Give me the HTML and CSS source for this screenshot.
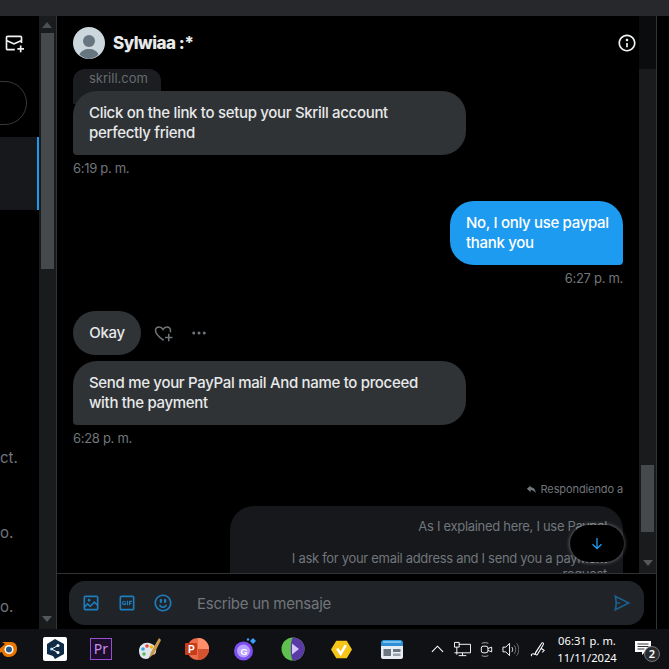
FILE: index.html
```html
<!DOCTYPE html>
<html lang="es">
<head>
<meta charset="utf-8">
<title>Sylwiaa :*</title>
<link rel="stylesheet" href="styles.css">
</head>
<body>
<div class="topbar"></div>
<main class="app">
  <aside class="sidebar">
    <div class="side-head">
      <svg class="i-mail" viewBox="0 0 24 24"><path d="M1.998 5.5c0-1.381 1.119-2.5 2.5-2.5h15c1.381 0 2.5 1.119 2.5 2.5V12h-2v-1.537l-8 3.635-8-3.635V18.5c0 .276.224.5.5.5H13v2H4.498c-1.381 0-2.5-1.119-2.5-2.5v-13zm2 2.766l8 3.635 8-3.635V5.5c0-.276-.224-.5-.5-.5h-15c-.276 0-.5.224-.5.5v2.766zM19 18v-3h2v3h3v2h-3v3h-2v-3h-3v-2h3z"/></svg>
    </div>
    <div class="side-search"></div>
    <div class="side-selected"></div>
    <p class="side-text t1">ct.</p>
    <p class="side-text t2">o.</p>
    <p class="side-text t3">o.</p>
  </aside>
  <div class="scrollbar left-bar">
    <span class="arrow up"></span>
    <span class="thumb"></span>
    <span class="arrow down"></span>
  </div>
  <section class="chat">
    <header class="chat-head">
      <svg class="avatar" viewBox="0 0 32 32"><circle cx="16" cy="16" r="16" fill="#ccd6dd"/><circle cx="16" cy="14" r="6" fill="#66757f"/><path d="M6.5 27.5c1.5-3.6 5-5.500 9.500-5.500s8 1.900 9.500 5.500A16 16 0 0 1 16 32a16 16 0 0 1-9.500-4.500z" fill="#66757f"/></svg>
      <h1 class="name">Sylwiaa :*</h1>
      <svg class="i-info" viewBox="0 0 24 24"><path d="M13.500 8.500c0 .83-.67 1.500-1.500 1.500s-1.500-.67-1.500-1.500S11.170 7 12 7s1.500.67 1.500 1.500zM13 17v-5h-2v5h2zm-1 5.250c5.660 0 10.250-4.590 10.250-10.250S17.660 1.750 12 1.750 1.750 6.340 1.750 12 6.340 22.250 12 22.250zM20.250 12c0 4.560-3.690 8.250-8.250 8.250S3.750 16.560 3.750 12 7.440 3.750 12 3.750s8.250 3.690 8.250 8.250z"/></svg>
      <span class="head-track"></span>
    </header>
    <div class="thread">
      <div class="messages">
        <div class="link-card">skrill.com</div>
        <div class="bubble them">Click on the link to setup your Skrill account perfectly friend</div>
        <div class="time">6:19 p. m.</div>
        <div class="bubble me">No, I only use paypal thank you</div>
        <div class="time right">6:27 p. m.</div>
        <div class="okay-row">
          <div class="bubble okay">Okay</div>
          <svg class="i-heart" viewBox="0 0 24 24"><path d="M13 19.500l-1 .8C7 16.500 3 13.500 3 9.300 3 6.600 5 4.800 7.300 4.800c1.900 0 3.600 1 4.700 2.900 1.100-1.900 2.800-2.900 4.700-2.900 2.300 0 4.300 1.800 4.300 4.500 0 .6-.1 1.200-.3 1.700" fill="none" stroke="#71767b" stroke-width="1.800"/><path d="M18 13v3.500h-3.500v1.800H18v3.500h1.800v-3.500h3.500v-1.800h-3.500V13z" fill="#71767b"/></svg>
          <svg class="i-dots" viewBox="0 0 24 24"><circle cx="5" cy="12" r="2"/><circle cx="12" cy="12" r="2"/><circle cx="19" cy="12" r="2"/></svg>
        </div>
        <div class="bubble them second">Send me your PayPal mail And name to proceed with the payment</div>
        <div class="time">6:28 p. m.</div>
        <div class="reply-label">
          <svg class="i-reply" viewBox="0 0 24 24"><path d="M10 3L2 10.500 10 18v-5c5 0 8 1.500 11 7 0-8-4-13-11-13V3z"/></svg>
          <span>Respondiendo a</span>
        </div>
        <div class="quote">
          <p>As I explained here, I use Paypal</p>
          <p>I ask for your email address and I send you a payment request</p>
        </div>
      </div>
      <div class="scrollbar right-bar">
        <span class="thumb"></span>
        <span class="arrow down"></span>
      </div>
      <button class="to-bottom" type="button" aria-label="Bajar">
        <svg viewBox="0 0 24 24"><path d="M13 3v13.586l5.043-5.043 1.414 1.414L12 20.414l-7.457-7.457 1.414-1.414L11 16.586V3h2z"/></svg>
      </button>
    </div>
    <div class="composer-wrap">
      <div class="composer">
        <svg class="c-icon" viewBox="0 0 24 24"><path d="M3 5.500C3 4.119 4.119 3 5.500 3h13C19.881 3 21 4.119 21 5.500v13c0 1.381-1.119 2.500-2.500 2.500h-13C4.119 21 3 19.881 3 18.500v-13zM5.500 5c-.276 0-.5.224-.5.500v9.086l3-3 3 3 5-5 3 3V5.500c0-.276-.224-.5-.5-.5h-13zM19 15.414l-3-3-5 5-3-3-3 3V18.500c0 .276.224.5.500.5h13c.276 0 .5-.224.5-.5v-3.086zM9.750 7C8.784 7 8 7.784 8 8.750s.784 1.750 1.750 1.750 1.750-.784 1.750-1.750S10.716 7 9.750 7z"/></svg>
        <svg class="c-icon" viewBox="0 0 24 24"><path d="M3 5.500C3 4.119 4.120 3 5.500 3h13C19.880 3 21 4.119 21 5.500v13c0 1.381-1.120 2.500-2.500 2.500h-13C4.120 21 3 19.881 3 18.500v-13zM5.500 5c-.280 0-.5.224-.5.500v13c0 .276.220.5.5.5h13c.280 0 .5-.224.5-.5v-13c0-.276-.220-.5-.5-.5h-13zM18 10.711V9.250h-3.740v5.500h1.440v-1.719h1.700V11.570h-1.700v-.859H18zM11.790 9.250h1.440v5.500h-1.440v-5.500zm-3.070 1.375c.340 0 .770.172 1.020.430l1.030-.860c-.510-.601-1.280-.945-2.050-.945C7.190 9.250 6 10.453 6 12s1.190 2.750 2.720 2.750c.850 0 1.540-.344 2.050-.945v-2.149H8.380v1.032H9.400v.515c-.170.086-.420.172-.680.172-.760 0-1.360-.602-1.360-1.375 0-.688.600-1.375 1.360-1.375z"/></svg>
        <svg class="c-icon" viewBox="0 0 24 24"><path d="M8 9.500C8 8.119 8.672 7 9.500 7S11 8.119 11 9.500 10.328 12 9.500 12 8 10.881 8 9.500zm6.500 2.500c.828 0 1.500-1.119 1.500-2.500S15.328 7 14.500 7 13 8.119 13 9.500s.672 2.500 1.500 2.500zM12 16c-2.224 0-3.021-2.227-3.051-2.316l-1.897.633c.05.150 1.271 3.684 4.949 3.684s4.898-3.533 4.949-3.684l-1.896-.638c-.033.095-.830 2.322-3.053 2.322zm10.250-4.001c0 5.652-4.598 10.250-10.250 10.250S1.750 17.652 1.750 12 6.348 1.750 12 1.750 22.250 6.348 22.250 12zm-2 0c0-4.549-3.701-8.250-8.250-8.250S3.750 7.451 3.750 12s3.701 8.250 8.250 8.250 8.250-3.701 8.250-8.250z"/></svg>
        <span class="placeholder">Escribe un mensaje</span>
        <svg class="c-send" viewBox="0 0 24 24"><path d="M2.504 21.866l.526-2.108C3.040 19.719 4 15.823 4 12s-.96-7.719-.97-7.758l-.526-2.108L22.236 12 2.504 21.866zM5.981 13c-.072 1.962-.340 3.833-.583 5.183L17.764 12 5.398 5.818c.242 1.349.510 3.221.583 5.183H10v2H5.981z"/></svg>
      </div>
    </div>
  </section>
  <div class="right-gutter"></div>
</main>
<footer class="taskbar">
  <div class="apps">
    <span class="app-cell"><svg viewBox="0 0 24 24"><path d="M2 14l8-7-3-2h9c4 0 6 3 6 7s-3 8-8 8c-4 0-6-2-7-5l-3 1z" fill="#ea7600"/><circle cx="14" cy="12.500" r="4.500" fill="#fff"/><circle cx="14" cy="12.500" r="3" fill="#265787"/></svg></span>
    <span class="app-cell tight"><svg viewBox="0 0 24 24"><rect width="24" height="24" rx="2" fill="#fff"/><path d="M12 2l9 5v10l-9 5-2-3-6-2V7z" fill="#0f2b46"/><circle cx="8.500" cy="12" r="1.600" fill="#6ecbf0"/><circle cx="15" cy="8.500" r="1.500" fill="#fff"/><circle cx="15" cy="15.500" r="1.500" fill="#fff"/><path d="M8.500 12L15 8.500M8.500 12l6.500 3.500" stroke="#fff" stroke-width="1"/></svg></span>
    <span class="app-cell"><span class="pr">Pr</span></span>
    <span class="app-cell"><svg viewBox="0 0 24 24"><path d="M2 14C2 8 7 5 12 6c5 1 8 4 7 9-1 4-3 2-5 3s-1 4-5 4-7-3-7-8z" fill="#dfe6ee"/><circle cx="6" cy="12" r="1.800" fill="#37a3e0"/><circle cx="10" cy="9" r="1.800" fill="#e8453c"/><circle cx="14.500" cy="10" r="1.800" fill="#f4b400"/><circle cx="7" cy="17" r="1.800" fill="#5bb75b"/><path d="M22 1l-8 14-2 6 5-4 7-14z" fill="#c99a4e"/></svg></span>
    <span class="app-cell"><svg viewBox="0 0 24 24"><circle cx="13" cy="12" r="11" fill="#ed6c47"/><path d="M13 1a11 11 0 0 1 11 11H13z" fill="#ff8f6b"/><path d="M13 12h11a11 11 0 0 1-11 11z" fill="#d35230"/><rect x="0" y="6" width="12" height="12" rx="1" fill="#c43e1c"/><text x="3" y="16" class="ppt">P</text></svg></span>
    <span class="app-cell"><svg viewBox="0 0 24 24"><circle cx="10.500" cy="14" r="9.500" fill="#7b4ff0"/><circle cx="10.500" cy="14" r="6.500" fill="#b9a2ff"/><text x="7.500" y="17.500" class="gm">G</text><path d="M20 1l3 3-3 3-3-3z" fill="#3aa0ff"/><circle cx="15" cy="2.500" r="1.200" fill="#3aa0ff"/></svg></span>
    <span class="app-cell"><svg viewBox="0 0 24 24"><circle cx="12" cy="12" r="11.500" fill="#5fbf4f"/><path d="M12 .5a11.500 11.500 0 0 1 0 23c-3-3-3-20 0-23z" fill="#5b3aa6"/><path d="M11 6.500l7 5.500-7 5.500z" fill="#d7c4ff"/></svg></span>
    <span class="app-cell"><svg class="hex" viewBox="0 0 24 24"><path d="M6 2h12l6 10-6 10H6L0 12z" fill="#f5c518"/><path d="M7 11l4 6 6-10" fill="none" stroke="#fff" stroke-width="3"/></svg></span>
    <span class="app-cell wide"><svg viewBox="0 0 24 24"><rect x="1" y="5" width="22" height="17" rx="2" fill="#e7edf2"/><path d="M1 9V6a3 3 0 0 1 3-3h16a3 3 0 0 1 3 3v3z" fill="#2f8fd6"/><path d="M3 5h18" stroke="#8fd3f4" stroke-width="1.500"/><rect x="3.500" y="12" width="7.500" height="7" fill="#6b7680"/><rect x="13" y="12" width="7.500" height="3" fill="#6b7680"/><rect x="13" y="16.500" width="7.500" height="2.500" fill="#9aa3ab"/></svg></span>
  </div>
  <div class="tray">
    <svg class="tray-caret" viewBox="0 0 14 8"><path d="M1 7l6-6 6 6" fill="none" stroke="#fff" stroke-width="1.200"/></svg>
    <svg class="tray-icon" viewBox="0 0 18 16"><path d="M5 2.500h12.500v9H.5M9 11.500v3M5 14.500h8M.5 .5h5v5h-5zM3 5.500v8" fill="none" stroke="#fff" stroke-width="1"/></svg>
    <svg class="tray-icon" viewBox="0 0 18 18"><rect x="3.500" y="5.500" width="7" height="7" rx="2" fill="none" stroke="#fff"/><path d="M10.500 8l4-1.500v5l-4-1.500" fill="none" stroke="#fff"/><path d="M4 2.500c2-1 5-1 7 0M4 15.500c2 1 5 1 7 0" fill="none" stroke="#aaa"/></svg>
    <svg class="tray-icon" viewBox="0 0 18 16"><path d="M1 5.500h3l4-4v13l-4-4H1z" fill="none" stroke="#fff"/><path d="M10.500 5.500c1 1.500 1 3.500 0 5" fill="none" stroke="#fff"/><path d="M13 3.500c2 2.500 2 6.500 0 9M15.500 1.500c3 3.500 3 9.500 0 13" fill="none" stroke="#777"/></svg>
    <svg class="tray-pen" viewBox="0 0 18 18"><path d="M2 16c-2-2 1-3 3-2l7-11c1-2 3-1 2 1L8 14c-1 2-3 0-2-2l6-9M12 8l3 2-2 2" fill="none" stroke="#fff" stroke-width="1.100"/></svg>
    <div class="clock"><span>06:31 p. m.</span><span>11/11/2024</span></div>
    <div class="notif">
      <svg viewBox="0 0 16 16"><path d="M0 0h16v11h-6l-3 3v-3H0z" fill="#fff"/><path d="M2.500 3h11M2.500 5.500h11M2.500 8h7" stroke="#333" stroke-width="1"/></svg>
      <span class="badge">2</span>
    </div>
  </div>
</footer>
</body>
</html>
```
FILE: styles.css
```css
* { box-sizing: border-box; }
html, body { margin: 0; padding: 0; }
body {
  width: 669px;
  height: 669px;
  overflow: hidden;
  background: #000;
  display: flex;
  flex-direction: column;
  font-family: Inter, "Liberation Sans", sans-serif;
  color: #e7e9ea;
}
svg { display: block; fill: currentColor; }

.topbar { height: 16px; flex: none; background: #27282c; }

.app { flex: 1; min-height: 0; display: flex; background: #000; }

/* left list */
.sidebar { width: 39px; flex: none; overflow: hidden; }
.side-head { height: 53px; padding: 17px 0 0 4px; color: #eff3f4; }
.i-mail { width: 20px; height: 20px; }
.side-search {
  width: 60px; height: 44px; margin: 12px 0 0 -33px;
  border: 1px solid #38393b; border-radius: 22px;
}
.side-selected {
  height: 73px; margin-top: 12px;
  background: #16181c; border-right: 2px solid #1d9bf0;
}
.side-text { margin: 0; font-size: 15px; line-height: 20px; color: #71767b; }
.t1 { margin-top: 238px; }
.t2 { margin-top: 55px; }
.t3 { margin-top: 54px; }

/* scrollbars */
.scrollbar { width: 17px; flex: none; background: #1a1b1d; display: flex; flex-direction: column; align-items: center; }
.left-bar { padding-right: 1px; }
.left-bar .thumb { width: 13px; height: 236px; background: #46494c; flex: none; }
.left-bar .arrow.up { margin: 6px 0 5px; }
.left-bar .arrow.down { margin: auto 0 7px; }
.arrow { display: block; width: 0; height: 0; border-left: 5px solid transparent; border-right: 5px solid transparent; flex: none; }
.arrow.up { border-bottom: 6px solid #4d5053; }
.arrow.down { border-top: 6px solid #55585b; }
.right-bar .thumb { width: 13px; height: 67px; margin-top: 396px; background: #46494c; flex: none; }
.right-bar .arrow.down { margin-top: 28px; }

/* chat */
.chat { width: 601px; flex: none; border-left: 1px solid #333538; border-right: 1px solid #333538; display: flex; flex-direction: column; min-height: 0; }
.chat-head { height: 53px; flex: none; display: flex; align-items: center; padding-left: 16px; }
.avatar { width: 32px; height: 32px; }
.name { margin: 0 0 0 8px; font-size: 17px; line-height: 20px; font-weight: 800; letter-spacing: -.5px; color: #e7e9ea; flex: 1; }
.i-info { width: 20px; height: 20px; color: #eff3f4; margin-right: 2px; }
.head-track { width: 17px; align-self: stretch; background: #0b0c0d; }

.thread { height: 504px; flex: none; display: flex; position: relative; }
.messages { flex: 1; min-width: 0; overflow: hidden; padding: 0 16px; display: flex; flex-direction: column; }
.link-card {
  align-self: flex-start; flex: none; width: 88px; height: 35px; margin-bottom: -13px;
  background: #1b1d20; border-radius: 12px 12px 0 0;
  padding: 2px 0 0 16px; font-size: 13px; line-height: 15px; color: #666b70;
}
.bubble { flex: none; font-size: 15px; font-weight: 500; letter-spacing: -.32px; line-height: 20px; padding: 12px 16px; border-radius: 24px; }
.them { width: 393px; background: #2f3336; border-bottom-left-radius: 4px; position: relative; }
.me { width: 173px; align-self: flex-end; margin-top: 25px; padding-right: 12px; background: #1d9bf0; color: #fff; border-bottom-right-radius: 4px; }
.time { flex: none; margin-top: 5px; font-size: 13px; letter-spacing: -.3px; line-height: 16px; color: #71767b; }
.time.right { text-align: right; }
.okay-row { flex: none; display: flex; align-items: center; margin-top: 25px; }
.okay { width: 68px; height: 44px; background: #2f3336; border-radius: 22px; text-align: center; padding: 12px 0; }
.i-heart { width: 20px; height: 20px; margin-left: 12px; }
.i-dots { width: 18px; height: 18px; margin-left: 17px; color: #71767b; }
.second { margin-top: 6px; }
.reply-label { flex: none; margin-top: 35px; height: 16px; display: flex; justify-content: flex-end; align-items: center; gap: 4px; font-size: 11px; letter-spacing: -.1px; color: #71767b; }
.i-reply { width: 11px; height: 11px; }
.quote {
  flex: none; width: 393px; align-self: flex-end; margin-top: 9px; padding: 12px 16px;
  background: #16181c; border-radius: 24px 24px 4px 24px;
  text-align: right; font-size: 13px; letter-spacing: -.3px; line-height: 16px; color: #71767b;
}
.quote p { margin: 0 0 16px; }

.to-bottom {
  position: absolute; left: 513px; top: 456px; width: 54px; height: 37px; padding: 0;
  border: 0; border-radius: 19px; background: #000; color: #1d9bf0;
  box-shadow: 0 0 4px rgba(255,255,255,.45); display: flex; align-items: center; justify-content: center;
}
.to-bottom svg { width: 16px; height: 16px; }

.composer-wrap { flex: 1; border-top: 1px solid #2f3336; padding: 7px 12px 4px; }
.composer { height: 44px; border-radius: 16px; background: #202327; display: flex; align-items: center; padding-left: 12px; }
.c-icon { width: 20px; height: 20px; color: #1d9bf0; margin-right: 16px; opacity: .75; }
.placeholder { margin-left: 8px; font-size: 15px; letter-spacing: -.25px; color: #71767b; flex: 1; }
.c-send { width: 20px; height: 20px; margin-right: 12px; color: #1d5f8f; }

.right-gutter { flex: 1; }

/* windows taskbar */
.taskbar { height: 40px; flex: none; background: #101114; display: flex; align-items: center; justify-content: space-between; font-family: "Noto Sans", "Open Sans", sans-serif; overflow: hidden; }
.apps { display: flex; margin-left: -17px; }
.app-cell { width: 48px; display: flex; justify-content: center; align-items: center; }
.app-cell.tight { margin-right: -2px; }
.app-cell.wide { margin-left: 3px; }
.app-cell svg { width: 24px; height: 24px; }
.app-cell .hex { width: 21px; height: 21px; }
.pr { width: 22px; height: 22px; border: 1.500px solid #9a4fd0; background: #1c0d2a; color: #c98cf0; font-size: 14px; line-height: 19px; text-align: center; }
.ppt { font: 700 10px "Liberation Sans", sans-serif; fill: #fff; }
.gm { font: 700 9px "Liberation Sans", sans-serif; fill: #fff; }
.tray { display: flex; align-items: center; }
.tray-caret { width: 13px; height: 8px; margin-right: 10px; }
.tray-icon { width: 17px; height: 17px; margin-right: 7px; }
.tray-pen { width: 17px; height: 17px; margin: 0 10px 0 4px; }
.clock { width: 60px; display: flex; flex-direction: column; align-items: center; font-size: 11.200px; line-height: 17px; color: #fff; white-space: nowrap; }
.notif { width: 52px; position: relative; padding-left: 18px; }
.notif svg { width: 16px; height: 16px; }
.badge { position: absolute; left: 27px; top: 5px; width: 16px; height: 16px; border-radius: 50%; background: #2a2b2e; border: 1px solid #777; font-size: 11px; line-height: 14px; text-align: center; color: #fff; font-weight: 600; }
```
